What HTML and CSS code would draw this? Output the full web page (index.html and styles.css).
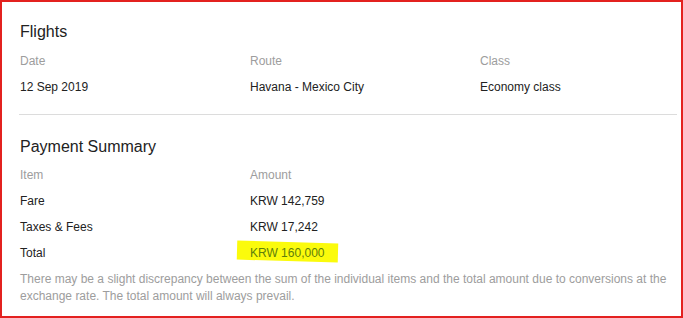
FILE: index.html
```html
<!DOCTYPE html>
<html>
<head>
<meta charset="utf-8">
<link rel="stylesheet" href="styles.css">
</head>
<body>
<div class="card">
  <section class="flights">
    <h2 class="title">Flights</h2>
    <div class="grid">
      <div class="label">Date</div>
      <div class="label">Route</div>
      <div class="label">Class</div>
      <div class="value">12 Sep 2019</div>
      <div class="value">Havana - Mexico City</div>
      <div class="value">Economy class</div>
    </div>
  </section>
  <hr class="divider">
  <section class="payment">
    <h2 class="title">Payment Summary</h2>
    <div class="grid">
      <div class="label">Item</div>
      <div class="label">Amount</div>
      <div></div>
      <div class="value">Fare</div>
      <div class="value">KRW 142,759</div>
      <div></div>
      <div class="value">Taxes &amp; Fees</div>
      <div class="value">KRW 17,242</div>
      <div></div>
      <div class="value">Total</div>
      <div class="value"><span class="marked">KRW 160,000</span></div>
      <div></div>
    </div>
    <p class="note">There may be a slight discrepancy between the sum of the individual items and the total amount due to conversions at the exchange rate. The total amount will always prevail.</p>
  </section>
</div>
</body>
</html>
```
FILE: styles.css
```css
html, body {
  margin: 0;
  padding: 0;
  background: #fff;
}
body {
  font-family: "Liberation Sans", Arial, sans-serif;
  color: #222;
}
.card {
  box-sizing: border-box;
  width: 683px;
  height: 318px;
  border: 2px solid #e3211f;
  padding: 20px 4px 0 18px;
  overflow: hidden;
}
.title {
  margin: 0;
  font-size: 16px;
  line-height: 20px;
  font-weight: normal;
  color: #222;
}
.flights .title {
  margin-bottom: 6px;
}
.payment .title {
  margin-bottom: 5px;
}
.grid {
  display: grid;
  grid-template-columns: 230px 230px 1fr;
  font-size: 12px;
  line-height: 26px;
}
.label {
  color: #9d9d9d;
}
.value {
  color: #222;
}
.divider {
  border: 0;
  border-top: 1px solid #dcdcdc;
  margin: 14px 0 22px -1px;
  height: 0;
}
.marked {
  position: relative;
  color: #5f7f0c;
}
.marked::before {
  content: "";
  position: absolute;
  left: -13px;
  right: -13px;
  top: -4px;
  height: 19px;
  background: #fbfb0c;
  transform: rotate(1.6deg);
  z-index: -1;
}
.payment .grid {
  position: relative;
  z-index: 0;
}
.note {
  margin: 5px 0 0 0;
  font-size: 12px;
  line-height: 17px;
  color: #9d9d9d;
}
```
